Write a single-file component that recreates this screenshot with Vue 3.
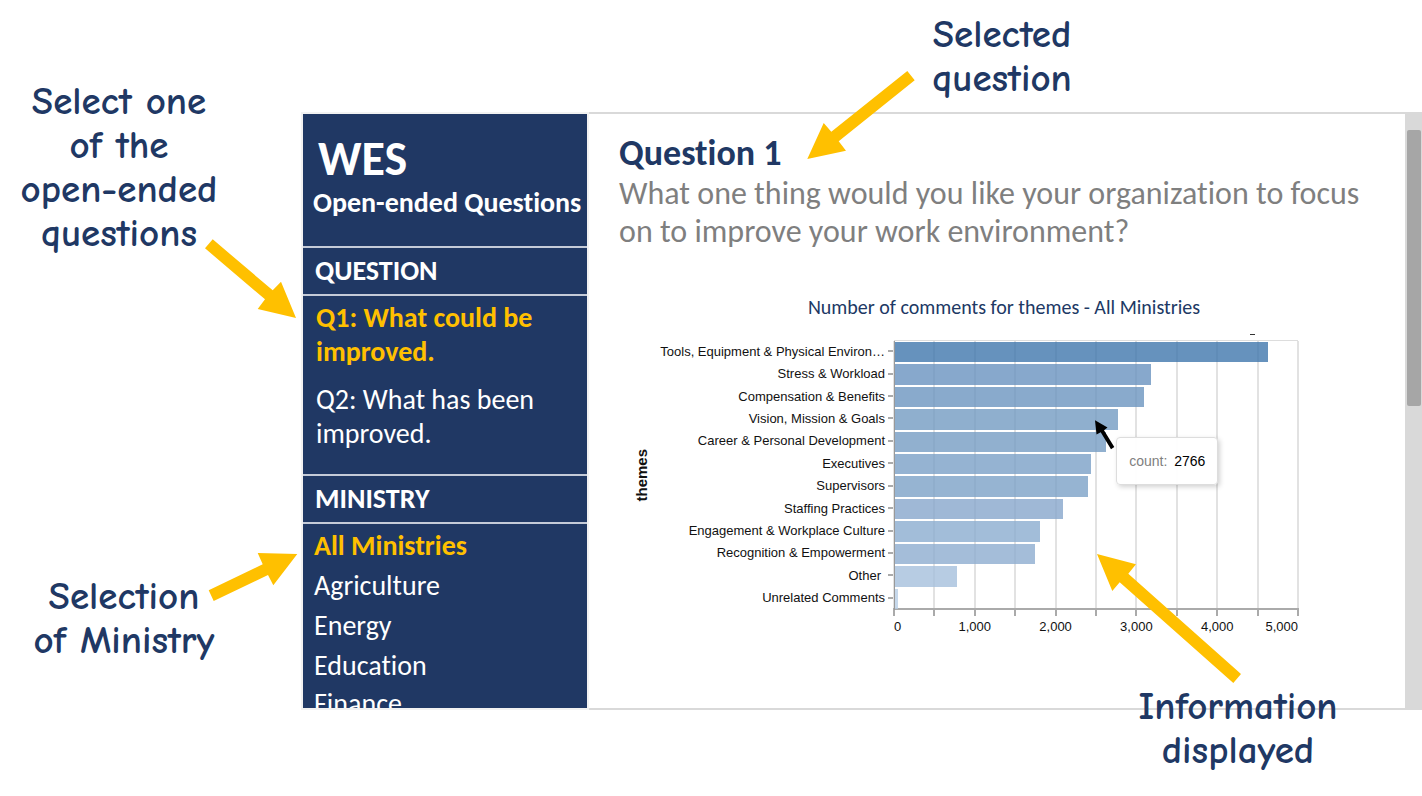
<script setup>
import { ref } from 'vue'

const questions = [
  { id: 'q1', label: 'Q1: What could be improved.' },
  { id: 'q2', label: 'Q2: What has been improved.' },
]
const ministries = ['All Ministries', 'Agriculture', 'Energy', 'Education', 'Finance']
const question = ref('q1')
const ministry = ref('All Ministries')

const max = 5000
const themes = [
  { name: 'Tools, Equipment & Physical Environ…', count: 4627, color: '#4077ac' },
  { name: 'Stress & Workload', count: 3178, color: '#6992bf' },
  { name: 'Compensation & Benefits', count: 3094, color: '#6b95bf' },
  { name: 'Vision, Mission & Goals', count: 2766, color: '#739bc2' },
  { name: 'Career & Personal Development', count: 2620, color: '#759cc3' },
  { name: 'Executives', count: 2430, color: '#7aa0c7' },
  { name: 'Supervisors', count: 2396, color: '#7ca1c7' },
  { name: 'Staffing Practices', count: 2085, color: '#87a6cc' },
  { name: 'Engagement & Workplace Culture', count: 1800, color: '#8baccf' },
  { name: 'Recognition & Empowerment', count: 1735, color: '#8dadd0' },
  { name: 'Other', count: 772, color: '#a5bfdc' },
  { name: 'Unrelated Comments', count: 40, color: '#b8cee6' },
]
const ticks = Array.from({ length: 11 }, (_, i) => i * 500)
const axisLabels = [0, 1000, 2000, 3000, 4000, 5000]
const pct = (v) => `${(v / max) * 100}%`
</script>

<template>
  <main class="page">
    <div class="app">
      <nav class="sidebar">
        <header class="brand">
          <h1>WES</h1>
          <p>Open-ended Questions</p>
        </header>
        <h2>QUESTION</h2>
        <div class="questions">
          <button
            v-for="q in questions"
            :key="q.id"
            type="button"
            :class="{ active: question === q.id }"
            @click="question = q.id"
          >{{ q.label }}</button>
        </div>
        <h2>MINISTRY</h2>
        <div class="ministries">
          <button
            v-for="m in ministries"
            :key="m"
            type="button"
            :class="{ active: ministry === m }"
            @click="ministry = m"
          >{{ m }}</button>
        </div>
      </nav>

      <section class="content">
        <h2>Question 1</h2>
        <p class="prompt">What one thing would you like your organization to focus on to improve your work environment?</p>
        <h3>Number of comments for themes - All Ministries</h3>
        <div class="chart">
          <div class="axis-title"><span>themes</span></div>
          <ul class="labels">
            <li v-for="t in themes" :key="t.name" :class="{ short: t.name === 'Other' }">{{ t.name }}</li>
          </ul>
          <div class="plot">
            <i class="cut-mark"></i>
            <i v-for="t in ticks" :key="t" class="grid-line" :style="{ left: pct(t) }"></i>
            <div class="bars">
              <div v-for="t in themes" :key="t.name" class="row">
                <div class="bar" :style="{ width: pct(t.count), background: t.color }"></div>
              </div>
            </div>
            <span
              v-for="v in axisLabels"
              :key="v"
              class="axis-label"
              :class="{ first: v === 0, last: v === max }"
              :style="{ left: pct(v) }"
            >{{ v.toLocaleString('en-US') }}</span>
            <div class="tooltip" role="tooltip"><span>count:</span> 2766</div>
          </div>
        </div>
      </section>

      <div class="scrollbar"><div class="thumb"></div></div>
    </div>

    <svg class="arrows" width="1422" height="796" viewBox="0 0 1422 796" aria-hidden="true">
      <g fill="#ffc000">
        <path d="M212.7 239.3 L272.7 290.3 L281 281.7 L296 318 L257.7 309 L265 299.3 L205 248.3Z" />
        <path d="M907.3 71 L914.7 80.3 L838.7 141.3 L846 150.7 L807.3 159 L823.7 123 L831.3 131.7Z" />
        <path d="M208.7 590.3 L262.7 564.3 L257.7 553 L297.3 554 L273.3 585.3 L268 575 L213.7 601Z" />
        <path d="M1097 554 L1136 564.3 L1128.3 573.7 L1241 674 L1233.3 683 L1119.7 582.3 L1112.3 591Z" />
      </g>
      <path d="M1095 420.3 L1107.5 427.5 L1104 430.3 L1114.3 447 L1111 449.3 L1100.7 432.3 L1096.5 434.5Z" fill="#000" />
    </svg>

    <p class="callout select-question">Select one<br>of the<br>open-ended<br>questions</p>
    <p class="callout selected-question">Selected<br>question</p>
    <p class="callout select-ministry">Selection<br>of Ministry</p>
    <p class="callout information">Information<br>displayed</p>
  </main>
</template>

<style>
body {
  background: #fff;
}
</style>

<style scoped>
* {
  box-sizing: border-box;
}
h1, h2, h3, p, ul {
  margin: 0;
  padding: 0;
}
.page {
  position: relative;
  min-height: 100vh;
  padding: 112px 0 0 301px;
  overflow: hidden;
  font-family: Carlito, Lato, sans-serif;
  font-variant-ligatures: none;
}
.app {
  display: flex;
}
.sidebar {
  flex: 0 0 288px;
  border: 2px solid #f2f2f2;
  background: #203864;
  color: #fff;
}
.brand {
  height: 132px;
  padding: 20px 0 0 10px;
  white-space: nowrap;
}
.brand h1 {
  padding-left: 5px;
  font-size: 48px;
  line-height: 50px;
}
.brand p {
  font-size: 28px;
  font-weight: 700;
  line-height: 38px;
}
.sidebar h2 {
  padding-left: 12px;
  border: solid #c5cbd8;
  border-width: 2px 0;
  font-size: 28px;
  line-height: 46px;
}
.sidebar button {
  display: block;
  width: 100%;
  padding: 0;
  border: 0;
  background: none;
  color: #fff;
  font: inherit;
  font-size: 28px;
  text-align: left;
  cursor: pointer;
}
.sidebar button.active {
  color: #ffc000;
  font-weight: 700;
}
.questions {
  display: grid;
  align-content: start;
  gap: 14px;
  height: 178px;
  padding: 5px 30px 0 13px;
}
.questions button {
  line-height: 34px;
}
.ministries {
  height: 184px;
  padding: 2px 0 0 11px;
  overflow: hidden;
}
.ministries button {
  line-height: 40px;
}
.ministries button:last-child {
  line-height: 36px;
}
.content {
  flex: 1;
  min-width: 0;
  padding: 20px 16px 0 30px;
  border: solid #d9d9d9;
  border-width: 2px 0;
}
.content h2 {
  color: #203864;
  font-size: 36px;
  line-height: 38px;
}
.prompt {
  margin-top: 3px;
  color: #7f7f7f;
  font-size: 32px;
  line-height: 38px;
}
.content h3 {
  margin-top: 44px;
  color: #203864;
  font-size: 20px;
  font-weight: 400;
  line-height: 24px;
  text-align: center;
}
.chart {
  display: flex;
  height: 269px;
  margin: 22px 91px 0 8px;
  color: #111;
  font-family: "Liberation Sans", Arial, sans-serif;
  font-size: 13px;
}
.axis-title {
  display: grid;
  flex: 0 0 28px;
  place-items: center;
  font-size: 15px;
  font-weight: 700;
}
.axis-title span {
  writing-mode: vertical-rl;
  transform: rotate(180deg);
}
.labels {
  display: grid;
  flex: 0 0 239px;
  grid-auto-rows: 1fr;
  height: 269px;
  margin-top: -1px;
  list-style: none;
}
.labels li {
  display: flex;
  align-items: center;
  justify-content: flex-end;
  gap: 3px;
  white-space: nowrap;
}
.labels li::after {
  width: 6px;
  height: 2px;
  background: #aaa;
  content: "";
}
.labels li.short {
  gap: 7px;
}
.plot {
  position: relative;
  flex: 1;
  border-bottom: 2px solid #aaa;
  box-shadow: 0 -1px #ddd;
}
.grid-line {
  position: absolute;
  top: 0;
  bottom: 0;
  width: 2px;
  margin-left: -1px;
  background: #e2e2e2;
}
.grid-line::after {
  position: absolute;
  top: 100%;
  left: 0;
  width: 2px;
  height: 8px;
  background: #aaa;
  content: "";
}
.bars {
  position: relative;
  display: grid;
  grid-auto-rows: 1fr;
  height: 269px;
  border-left: 1px solid #999;
}
.row {
  padding-top: 1px;
  padding-bottom: 1px;
}
.bar {
  height: 100%;
  opacity: 0.8;
}
.axis-label {
  position: absolute;
  top: 100%;
  padding-top: 11px;
  line-height: 16px;
  transform: translateX(-50%);
}
.axis-label.first {
  transform: none;
}
.axis-label.last {
  transform: translateX(-100%);
}
.cut-mark {
  position: absolute;
  top: -7px;
  left: 88%;
  width: 5px;
  height: 1px;
  background: #333;
}
.tooltip {
  position: absolute;
  top: 96px;
  left: 55%;
  padding: 15px 12px;
  border: 1px solid #ddd;
  border-radius: 4px;
  background: #fffffff5;
  box-shadow: 2px 2px 5px #0000002e;
  color: #000;
  font-size: 14px;
  line-height: 16px;
  white-space: nowrap;
}
.tooltip span {
  margin-right: 3px;
  color: #808080;
}
.scrollbar {
  flex: 0 0 17px;
  padding: 18px 1px 0 2px;
  background: #d9d9d9;
}
.thumb {
  height: 276px;
  border-radius: 2px;
  background: #a6a6a6;
}
.arrows {
  position: absolute;
  top: 0;
  left: 0;
  pointer-events: none;
}
.callout {
  position: absolute;
  color: #203864;
  font-family: "Comic Sans MS", "Comic Neue", Lato, sans-serif;
  font-size: 39px;
  font-weight: 700;
  line-height: 44px;
  text-align: center;
  white-space: nowrap;
  transform: translateX(-50%);
}
.select-question {
  top: 80px;
  left: 119px;
}
.selected-question {
  top: 13px;
  left: 1002px;
}
.select-ministry {
  top: 575px;
  left: 124px;
}
.information {
  top: 685px;
  left: 1238px;
}
</style>
